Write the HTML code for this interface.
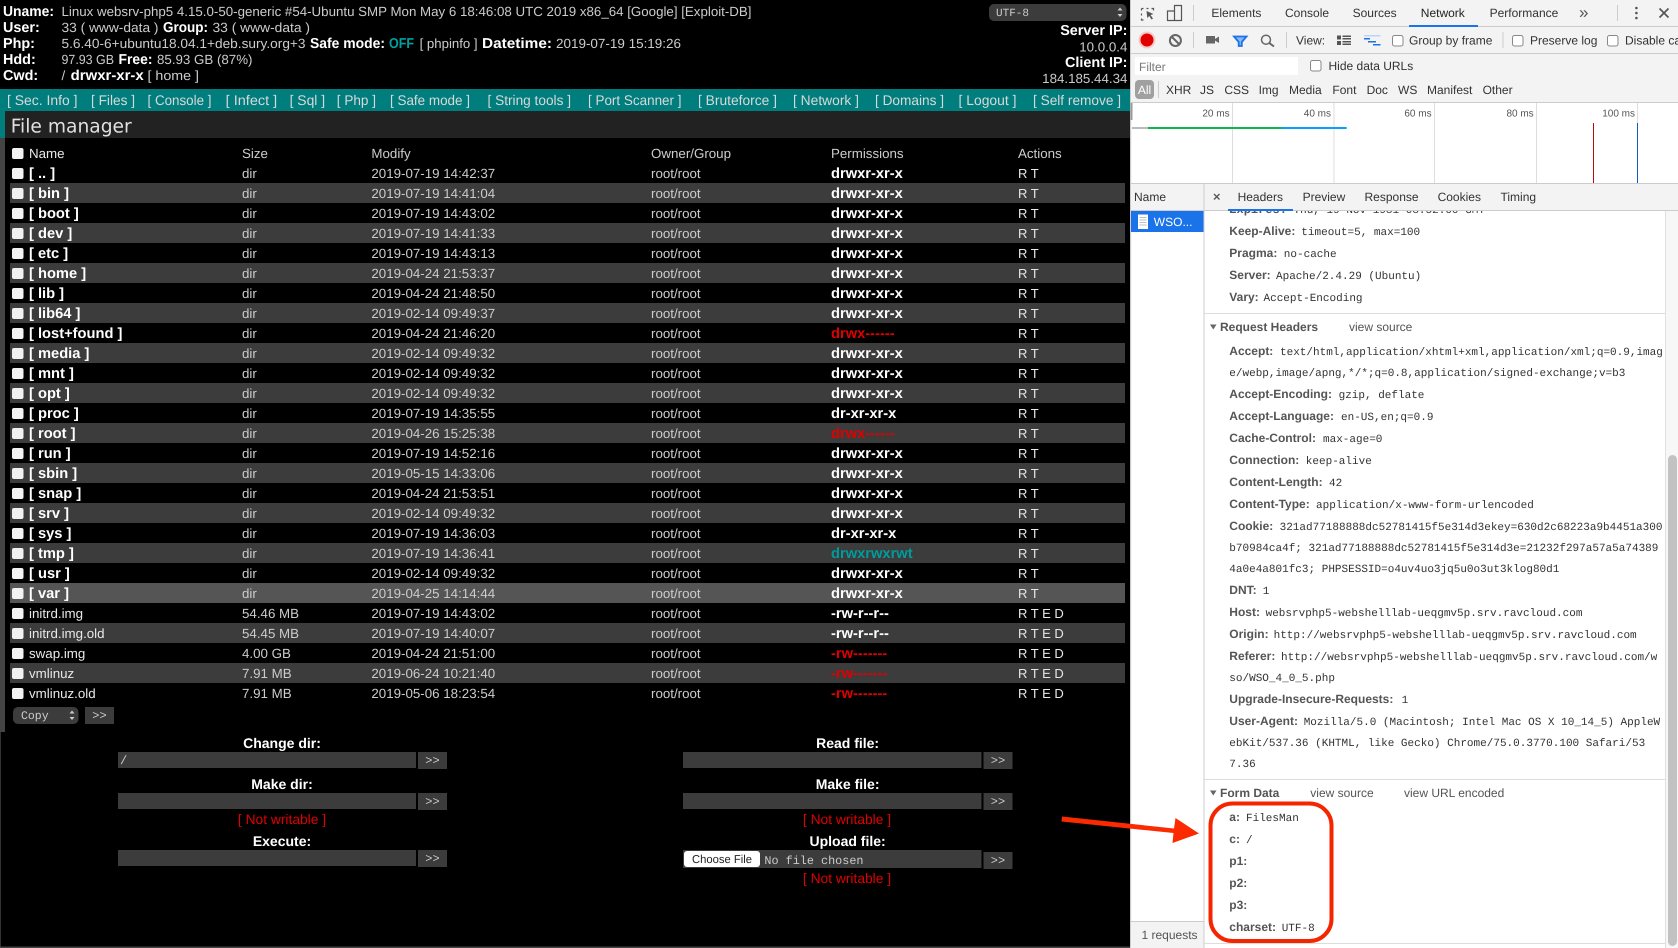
<!DOCTYPE html>
<html><head><meta charset="utf-8"><title>WSO</title>
<style>
html,body{margin:0;padding:0;background:#000;overflow:hidden}
svg{display:block;filter:blur(.3px)}
text{font-family:"Liberation Sans",sans-serif;white-space:pre;text-rendering:geometricPrecision}
.t{font-size:13.33px;fill:#ccc}
.w{font-size:13.33px;fill:#e8e8e8}
.a{font-size:13px;fill:#e8e8e8}
.b{font-size:14.4px;font-weight:bold;fill:#fff}
.n{font-size:14.7px;font-weight:bold;fill:#fff}
.l{font-size:14px;font-weight:bold;fill:#fff}
.nav{font-size:14px;fill:#d8d8d8}
.r{fill:#e00000;font-weight:bold;font-size:14.7px}
.red{font-size:13.8px;fill:#e00000}
.m{font-family:"Liberation Mono",monospace;font-size:12px;fill:#ccc}
.d{font-size:12px;fill:#333}
.g{font-size:12px;fill:#555}
.s{font-size:10px;fill:#555}
.k{font-size:12px;font-weight:bold;fill:#555}
.v{font-family:"Liberation Mono",monospace;font-size:11px;fill:#333}
.cb{fill:#f2f2f2}
</style></head><body>
<svg xmlns="http://www.w3.org/2000/svg" width="1678" height="948" viewBox="0 0 1678 948">
<rect width="1678" height="948" fill="#000"/>
<!-- header info -->
<text class="b" x="3" y="16" textLength="51" lengthAdjust="spacingAndGlyphs">Uname:</text>
<text class="t" x="61.5" y="16" textLength="690" lengthAdjust="spacingAndGlyphs">Linux websrv-php5 4.15.0-50-generic #54-Ubuntu SMP Mon May 6 18:46:08 UTC 2019 x86_64 [Google] [Exploit-DB]</text>
<text class="b" x="3" y="32">User:</text>
<text class="t" x="61.5" y="32" textLength="97" lengthAdjust="spacingAndGlyphs">33 ( www-data )</text>
<text class="b" x="163" y="32" textLength="45" lengthAdjust="spacingAndGlyphs">Group:</text>
<text class="t" x="212.5" y="32" textLength="97.5" lengthAdjust="spacingAndGlyphs">33 ( www-data )</text>
<text class="b" x="3" y="48">Php:</text>
<text class="t" x="61.5" y="48" textLength="244" lengthAdjust="spacingAndGlyphs">5.6.40-6+ubuntu18.04.1+deb.sury.org+3</text>
<text class="b" x="310" y="48" textLength="75" lengthAdjust="spacingAndGlyphs">Safe mode:</text>
<text class="b" x="389" y="48" textLength="25" lengthAdjust="spacingAndGlyphs" style="fill:#00a0a0">OFF</text>
<text class="t" x="419.6" y="48" textLength="58" lengthAdjust="spacingAndGlyphs">[ phpinfo ]</text>
<text class="b" x="482" y="48" textLength="70" lengthAdjust="spacingAndGlyphs">Datetime:</text>
<text class="t" x="556" y="48" textLength="125" lengthAdjust="spacingAndGlyphs">2019-07-19 15:19:26</text>
<text class="b" x="3" y="64">Hdd:</text>
<text class="t" x="61.5" y="64" textLength="52.5" lengthAdjust="spacingAndGlyphs">97.93 GB</text>
<text class="b" x="118.5" y="64" textLength="34" lengthAdjust="spacingAndGlyphs">Free:</text>
<text class="t" x="157" y="64" textLength="95.5" lengthAdjust="spacingAndGlyphs">85.93 GB (87%)</text>
<text class="b" x="3" y="80">Cwd:</text>
<text class="t" x="61.5" y="80">/</text>
<text class="b" x="70.7" y="80" textLength="73" lengthAdjust="spacingAndGlyphs">drwxr-xr-x</text>
<text class="t" x="147.5" y="80" textLength="51.5" lengthAdjust="spacingAndGlyphs">[ home ]</text>
<!-- charset select -->
<rect x="989" y="4" width="137.5" height="17" rx="5" fill="#3c3c3c"/>
<text class="m" x="996" y="16" style="font-size:11px">UTF-8</text>
<path d="M1117.5 10.5l2.5-3 2.5 3zM1117.5 14l2.5 3 2.5-3z" fill="#ccc"/>
<text class="b" x="1127.4" y="35" text-anchor="end">Server IP:</text>
<text class="t" x="1127.4" y="51.5" text-anchor="end">10.0.0.4</text>
<text class="b" x="1127.4" y="67" text-anchor="end">Client IP:</text>
<text class="t" x="1127.4" y="83" text-anchor="end">184.185.44.34</text>
<!-- nav -->
<rect x="0" y="89" width="1130" height="22" fill="#007d7d"/>
<text class="nav" x="7" y="105" textLength="70.5" lengthAdjust="spacingAndGlyphs">[ Sec. Info ]</text>
<text class="nav" x="91" y="105" textLength="44" lengthAdjust="spacingAndGlyphs">[ Files ]</text>
<text class="nav" x="147.5" y="105" textLength="64" lengthAdjust="spacingAndGlyphs">[ Console ]</text>
<text class="nav" x="225.7" y="105" textLength="51.5" lengthAdjust="spacingAndGlyphs">[ Infect ]</text>
<text class="nav" x="289.6" y="105" textLength="35.5" lengthAdjust="spacingAndGlyphs">[ Sql ]</text>
<text class="nav" x="336.8" y="105" textLength="39.2" lengthAdjust="spacingAndGlyphs">[ Php ]</text>
<text class="nav" x="390" y="105" textLength="80" lengthAdjust="spacingAndGlyphs">[ Safe mode ]</text>
<text class="nav" x="487.5" y="105" textLength="83.5" lengthAdjust="spacingAndGlyphs">[ String tools ]</text>
<text class="nav" x="588" y="105" textLength="93.5" lengthAdjust="spacingAndGlyphs">[ Port Scanner ]</text>
<text class="nav" x="698" y="105" textLength="79" lengthAdjust="spacingAndGlyphs">[ Bruteforce ]</text>
<text class="nav" x="793" y="105" textLength="66" lengthAdjust="spacingAndGlyphs">[ Network ]</text>
<text class="nav" x="875" y="105" textLength="69" lengthAdjust="spacingAndGlyphs">[ Domains ]</text>
<text class="nav" x="958.5" y="105" textLength="58" lengthAdjust="spacingAndGlyphs">[ Logout ]</text>
<text class="nav" x="1033" y="105" textLength="88" lengthAdjust="spacingAndGlyphs">[ Self remove ]</text>
<!-- title -->
<rect x="0" y="111" width="5" height="27" fill="#007d7d"/>
<rect x="5" y="111" width="1125" height="27" fill="#222"/>
<text x="10.7" y="132.5" textLength="121" lengthAdjust="spacingAndGlyphs" style="font-family:'DejaVu Sans',sans-serif;font-size:19px;fill:#e0e0e0">File manager</text>
<rect x="0" y="138" width="5" height="594" fill="#444"/>
<rect x="0" y="732" width="1" height="216" fill="#333"/>
<rect x="0" y="946.5" width="1130" height="1.5" fill="#444"/>
<!-- stripes -->
<g fill="#3c3c3c">
<rect x="10" y="183" width="1115" height="20"/><rect x="10" y="223" width="1115" height="20"/>
<rect x="10" y="263" width="1115" height="20"/><rect x="10" y="303" width="1115" height="20"/>
<rect x="10" y="343" width="1115" height="20"/><rect x="10" y="383" width="1115" height="20"/>
<rect x="10" y="423" width="1115" height="20"/><rect x="10" y="463" width="1115" height="20"/>
<rect x="10" y="503" width="1115" height="20"/><rect x="10" y="543" width="1115" height="20"/>
<rect x="10" y="583" width="1115" height="20" fill="#555"/><rect x="10" y="623" width="1115" height="20"/>
<rect x="10" y="663" width="1115" height="20"/>
</g>
<!-- table -->
<g transform="translate(0,143)"><rect class="cb" x="12" y="5" width="11.5" height="11" rx="2"/><text class="w" x="29" y="15">Name</text><text class="t" x="242" y="15">Size</text><text class="t" x="371.4" y="15">Modify</text><text class="t" x="651" y="15">Owner/Group</text><text class="t" x="831" y="15">Permissions</text><text class="t" x="1018" y="15">Actions</text></g>
<g transform="translate(0,163)"><rect class="cb" x="12" y="5" width="11.5" height="11" rx="2"/><text class="n" x="29" y="15">[ .. ]</text><text class="t" x="242" y="15">dir</text><text class="t" x="371.4" y="15">2019-07-19 14:42:37</text><text class="t" x="651" y="15">root/root</text><text class="n" x="831" y="15">drwxr-xr-x</text><text class="a" x="1018" y="15">R T</text></g>
<g transform="translate(0,183)"><rect class="cb" x="12" y="5" width="11.5" height="11" rx="2"/><text class="n" x="29" y="15">[ bin ]</text><text class="t" x="242" y="15">dir</text><text class="t" x="371.4" y="15">2019-07-19 14:41:04</text><text class="t" x="651" y="15">root/root</text><text class="n" x="831" y="15">drwxr-xr-x</text><text class="a" x="1018" y="15">R T</text></g>
<g transform="translate(0,203)"><rect class="cb" x="12" y="5" width="11.5" height="11" rx="2"/><text class="n" x="29" y="15">[ boot ]</text><text class="t" x="242" y="15">dir</text><text class="t" x="371.4" y="15">2019-07-19 14:43:02</text><text class="t" x="651" y="15">root/root</text><text class="n" x="831" y="15">drwxr-xr-x</text><text class="a" x="1018" y="15">R T</text></g>
<g transform="translate(0,223)"><rect class="cb" x="12" y="5" width="11.5" height="11" rx="2"/><text class="n" x="29" y="15">[ dev ]</text><text class="t" x="242" y="15">dir</text><text class="t" x="371.4" y="15">2019-07-19 14:41:33</text><text class="t" x="651" y="15">root/root</text><text class="n" x="831" y="15">drwxr-xr-x</text><text class="a" x="1018" y="15">R T</text></g>
<g transform="translate(0,243)"><rect class="cb" x="12" y="5" width="11.5" height="11" rx="2"/><text class="n" x="29" y="15">[ etc ]</text><text class="t" x="242" y="15">dir</text><text class="t" x="371.4" y="15">2019-07-19 14:43:13</text><text class="t" x="651" y="15">root/root</text><text class="n" x="831" y="15">drwxr-xr-x</text><text class="a" x="1018" y="15">R T</text></g>
<g transform="translate(0,263)"><rect class="cb" x="12" y="5" width="11.5" height="11" rx="2"/><text class="n" x="29" y="15">[ home ]</text><text class="t" x="242" y="15">dir</text><text class="t" x="371.4" y="15">2019-04-24 21:53:37</text><text class="t" x="651" y="15">root/root</text><text class="n" x="831" y="15">drwxr-xr-x</text><text class="a" x="1018" y="15">R T</text></g>
<g transform="translate(0,283)"><rect class="cb" x="12" y="5" width="11.5" height="11" rx="2"/><text class="n" x="29" y="15">[ lib ]</text><text class="t" x="242" y="15">dir</text><text class="t" x="371.4" y="15">2019-04-24 21:48:50</text><text class="t" x="651" y="15">root/root</text><text class="n" x="831" y="15">drwxr-xr-x</text><text class="a" x="1018" y="15">R T</text></g>
<g transform="translate(0,303)"><rect class="cb" x="12" y="5" width="11.5" height="11" rx="2"/><text class="n" x="29" y="15">[ lib64 ]</text><text class="t" x="242" y="15">dir</text><text class="t" x="371.4" y="15">2019-02-14 09:49:37</text><text class="t" x="651" y="15">root/root</text><text class="n" x="831" y="15">drwxr-xr-x</text><text class="a" x="1018" y="15">R T</text></g>
<g transform="translate(0,323)"><rect class="cb" x="12" y="5" width="11.5" height="11" rx="2"/><text class="n" x="29" y="15">[ lost+found ]</text><text class="t" x="242" y="15">dir</text><text class="t" x="371.4" y="15">2019-04-24 21:46:20</text><text class="t" x="651" y="15">root/root</text><text class="r" x="831" y="15">drwx------</text><text class="a" x="1018" y="15">R T</text></g>
<g transform="translate(0,343)"><rect class="cb" x="12" y="5" width="11.5" height="11" rx="2"/><text class="n" x="29" y="15">[ media ]</text><text class="t" x="242" y="15">dir</text><text class="t" x="371.4" y="15">2019-02-14 09:49:32</text><text class="t" x="651" y="15">root/root</text><text class="n" x="831" y="15">drwxr-xr-x</text><text class="a" x="1018" y="15">R T</text></g>
<g transform="translate(0,363)"><rect class="cb" x="12" y="5" width="11.5" height="11" rx="2"/><text class="n" x="29" y="15">[ mnt ]</text><text class="t" x="242" y="15">dir</text><text class="t" x="371.4" y="15">2019-02-14 09:49:32</text><text class="t" x="651" y="15">root/root</text><text class="n" x="831" y="15">drwxr-xr-x</text><text class="a" x="1018" y="15">R T</text></g>
<g transform="translate(0,383)"><rect class="cb" x="12" y="5" width="11.5" height="11" rx="2"/><text class="n" x="29" y="15">[ opt ]</text><text class="t" x="242" y="15">dir</text><text class="t" x="371.4" y="15">2019-02-14 09:49:32</text><text class="t" x="651" y="15">root/root</text><text class="n" x="831" y="15">drwxr-xr-x</text><text class="a" x="1018" y="15">R T</text></g>
<g transform="translate(0,403)"><rect class="cb" x="12" y="5" width="11.5" height="11" rx="2"/><text class="n" x="29" y="15">[ proc ]</text><text class="t" x="242" y="15">dir</text><text class="t" x="371.4" y="15">2019-07-19 14:35:55</text><text class="t" x="651" y="15">root/root</text><text class="n" x="831" y="15">dr-xr-xr-x</text><text class="a" x="1018" y="15">R T</text></g>
<g transform="translate(0,423)"><rect class="cb" x="12" y="5" width="11.5" height="11" rx="2"/><text class="n" x="29" y="15">[ root ]</text><text class="t" x="242" y="15">dir</text><text class="t" x="371.4" y="15">2019-04-26 15:25:38</text><text class="t" x="651" y="15">root/root</text><text class="r" x="831" y="15">drwx------</text><text class="a" x="1018" y="15">R T</text></g>
<g transform="translate(0,443)"><rect class="cb" x="12" y="5" width="11.5" height="11" rx="2"/><text class="n" x="29" y="15">[ run ]</text><text class="t" x="242" y="15">dir</text><text class="t" x="371.4" y="15">2019-07-19 14:52:16</text><text class="t" x="651" y="15">root/root</text><text class="n" x="831" y="15">drwxr-xr-x</text><text class="a" x="1018" y="15">R T</text></g>
<g transform="translate(0,463)"><rect class="cb" x="12" y="5" width="11.5" height="11" rx="2"/><text class="n" x="29" y="15">[ sbin ]</text><text class="t" x="242" y="15">dir</text><text class="t" x="371.4" y="15">2019-05-15 14:33:06</text><text class="t" x="651" y="15">root/root</text><text class="n" x="831" y="15">drwxr-xr-x</text><text class="a" x="1018" y="15">R T</text></g>
<g transform="translate(0,483)"><rect class="cb" x="12" y="5" width="11.5" height="11" rx="2"/><text class="n" x="29" y="15">[ snap ]</text><text class="t" x="242" y="15">dir</text><text class="t" x="371.4" y="15">2019-04-24 21:53:51</text><text class="t" x="651" y="15">root/root</text><text class="n" x="831" y="15">drwxr-xr-x</text><text class="a" x="1018" y="15">R T</text></g>
<g transform="translate(0,503)"><rect class="cb" x="12" y="5" width="11.5" height="11" rx="2"/><text class="n" x="29" y="15">[ srv ]</text><text class="t" x="242" y="15">dir</text><text class="t" x="371.4" y="15">2019-02-14 09:49:32</text><text class="t" x="651" y="15">root/root</text><text class="n" x="831" y="15">drwxr-xr-x</text><text class="a" x="1018" y="15">R T</text></g>
<g transform="translate(0,523)"><rect class="cb" x="12" y="5" width="11.5" height="11" rx="2"/><text class="n" x="29" y="15">[ sys ]</text><text class="t" x="242" y="15">dir</text><text class="t" x="371.4" y="15">2019-07-19 14:36:03</text><text class="t" x="651" y="15">root/root</text><text class="n" x="831" y="15">dr-xr-xr-x</text><text class="a" x="1018" y="15">R T</text></g>
<g transform="translate(0,543)"><rect class="cb" x="12" y="5" width="11.5" height="11" rx="2"/><text class="n" x="29" y="15">[ tmp ]</text><text class="t" x="242" y="15">dir</text><text class="t" x="371.4" y="15">2019-07-19 14:36:41</text><text class="t" x="651" y="15">root/root</text><text class="n" x="831" y="15" style="fill:#009c9c">drwxrwxrwt</text><text class="a" x="1018" y="15">R T</text></g>
<g transform="translate(0,563)"><rect class="cb" x="12" y="5" width="11.5" height="11" rx="2"/><text class="n" x="29" y="15">[ usr ]</text><text class="t" x="242" y="15">dir</text><text class="t" x="371.4" y="15">2019-02-14 09:49:32</text><text class="t" x="651" y="15">root/root</text><text class="n" x="831" y="15">drwxr-xr-x</text><text class="a" x="1018" y="15">R T</text></g>
<g transform="translate(0,583)"><rect class="cb" x="12" y="5" width="11.5" height="11" rx="2"/><text class="n" x="29" y="15">[ var ]</text><text class="t" x="242" y="15">dir</text><text class="t" x="371.4" y="15">2019-04-25 14:14:44</text><text class="t" x="651" y="15">root/root</text><text class="n" x="831" y="15">drwxr-xr-x</text><text class="a" x="1018" y="15">R T</text></g>
<g transform="translate(0,603)"><rect class="cb" x="12" y="5" width="11.5" height="11" rx="2"/><text class="w" x="29" y="15">initrd.img</text><text class="t" x="242" y="15">54.46 MB</text><text class="t" x="371.4" y="15">2019-07-19 14:43:02</text><text class="t" x="651" y="15">root/root</text><text class="n" x="831" y="15">-rw-r--r--</text><text class="a" x="1018" y="15">R T E D</text></g>
<g transform="translate(0,623)"><rect class="cb" x="12" y="5" width="11.5" height="11" rx="2"/><text class="w" x="29" y="15">initrd.img.old</text><text class="t" x="242" y="15">54.45 MB</text><text class="t" x="371.4" y="15">2019-07-19 14:40:07</text><text class="t" x="651" y="15">root/root</text><text class="n" x="831" y="15">-rw-r--r--</text><text class="a" x="1018" y="15">R T E D</text></g>
<g transform="translate(0,643)"><rect class="cb" x="12" y="5" width="11.5" height="11" rx="2"/><text class="w" x="29" y="15">swap.img</text><text class="t" x="242" y="15">4.00 GB</text><text class="t" x="371.4" y="15">2019-04-24 21:51:00</text><text class="t" x="651" y="15">root/root</text><text class="r" x="831" y="15">-rw-------</text><text class="a" x="1018" y="15">R T E D</text></g>
<g transform="translate(0,663)"><rect class="cb" x="12" y="5" width="11.5" height="11" rx="2"/><text class="w" x="29" y="15">vmlinuz</text><text class="t" x="242" y="15">7.91 MB</text><text class="t" x="371.4" y="15">2019-06-24 10:21:40</text><text class="t" x="651" y="15">root/root</text><text class="r" x="831" y="15">-rw-------</text><text class="a" x="1018" y="15">R T E D</text></g>
<g transform="translate(0,683)"><rect class="cb" x="12" y="5" width="11.5" height="11" rx="2"/><text class="w" x="29" y="15">vmlinuz.old</text><text class="t" x="242" y="15">7.91 MB</text><text class="t" x="371.4" y="15">2019-05-06 18:23:54</text><text class="t" x="651" y="15">root/root</text><text class="r" x="831" y="15">-rw-------</text><text class="a" x="1018" y="15">R T E D</text></g>
<!-- copy -->
<rect x="13" y="707" width="65.5" height="17" rx="5" fill="#3c3c3c"/>
<text class="m" x="21" y="719" style="font-size:11.5px">Copy</text>
<path d="M69.5 713.5l2.5-3 2.5 3zM69.5 717l2.5 3 2.5-3z" fill="#ccc"/>
<rect x="85" y="707" width="29" height="17" fill="#3c3c3c"/>
<text class="m" x="99.5" y="719" text-anchor="middle">&gt;&gt;</text>
<!-- forms -->
<text class="l" x="282" y="748" text-anchor="middle">Change dir:</text>
<text class="l" x="282" y="789" text-anchor="middle">Make dir:</text>
<text class="red" x="282" y="824" text-anchor="middle">[ Not writable ]</text>
<text class="l" x="282" y="846" text-anchor="middle">Execute:</text>
<text class="l" x="847.6" y="748" text-anchor="middle">Read file:</text>
<text class="l" x="847.6" y="789" text-anchor="middle">Make file:</text>
<text class="red" x="847" y="824" text-anchor="middle">[ Not writable ]</text>
<text class="l" x="847.6" y="846" text-anchor="middle">Upload file:</text>
<text class="red" x="847" y="883" text-anchor="middle">[ Not writable ]</text>
<g fill="#3c3c3c">
<rect x="118" y="752" width="298" height="16"/><rect x="418" y="752" width="29" height="17"/>
<rect x="118" y="793" width="298" height="16"/><rect x="418" y="793" width="29" height="17"/>
<rect x="118" y="850" width="298" height="16"/><rect x="418" y="850" width="29" height="17"/>
<rect x="683" y="752" width="298.5" height="16"/><rect x="983.5" y="752" width="29" height="17"/>
<rect x="683" y="793" width="298.5" height="16"/><rect x="983.5" y="793" width="29" height="17"/>
<rect x="683" y="850" width="298.5" height="18"/><rect x="983.5" y="852" width="29" height="17"/>
</g>
<text class="m" x="120" y="764">/</text>
<text class="m" x="432.5" y="764" text-anchor="middle">&gt;&gt;</text>
<text class="m" x="432.5" y="805" text-anchor="middle">&gt;&gt;</text>
<text class="m" x="432.5" y="862" text-anchor="middle">&gt;&gt;</text>
<text class="m" x="998" y="764" text-anchor="middle">&gt;&gt;</text>
<text class="m" x="998" y="805" text-anchor="middle">&gt;&gt;</text>
<text class="m" x="998" y="864" text-anchor="middle">&gt;&gt;</text>
<rect x="684" y="851" width="76" height="16" rx="3" fill="#fff"/>
<text x="722" y="863" text-anchor="middle" style="font-size:11.5px;fill:#222" textLength="60" lengthAdjust="spacingAndGlyphs">Choose File</text>
<text class="m" x="764.4" y="864" style="font-size:11.8px">No file chosen</text>
<!-- devtools -->
<rect x="1130" y="0" width="548" height="948" fill="#fff"/>
<rect x="1130" y="0" width="1.2" height="948" fill="#ccc"/>
<rect x="1131" y="0" width="547" height="102" fill="#f3f3f3"/>
<rect x="1131" y="26" width="547" height="1" fill="#ccc"/>
<rect x="1131" y="53" width="547" height="1" fill="#ccc"/>
<rect x="1131" y="102" width="547" height="1" fill="#ccc"/>
<!-- top icons -->
<path d="M1141.5 8.5h2m3 0h2m3 0h2v2M1141.5 8.5v2m0 3v2m0 3v1.5h2" fill="none" stroke="#555" stroke-width="1.2"/>
<path d="M1146.5 11l7 3-3 1 2.5 3.5-1.5 1-2.2-3.500-2 2z" fill="#555"/>
<path d="M1174.5 5.5h7v15h-7zM1174.5 11h-7v9.5h7" fill="none" stroke="#555" stroke-width="1.2"/>
<g fill="#555"><rect x="1193" y="5" width="1" height="16" fill="#ccc"/><rect x="1617" y="5" width="1" height="16" fill="#ccc"/><circle cx="1636.4" cy="8" r="1.3"/><circle cx="1636.4" cy="13" r="1.3"/><circle cx="1636.4" cy="18" r="1.3"/></g>
<path d="M1659.5 8.5l9 9m0-9l-9 9" stroke="#555" stroke-width="1.7"/>
<text class="d" x="1211.4" y="17">Elements</text>
<text class="d" x="1285" y="17">Console</text>
<text class="d" x="1352.6" y="17">Sources</text>
<text class="d" x="1420.8" y="17" style="fill:#222">Network</text>
<text class="d" x="1489.6" y="17">Performance</text>
<text class="d" x="1579" y="18" style="font-size:17px;fill:#555">»</text>
<rect x="1409" y="25" width="69" height="2" fill="#1a73e8"/>
<!-- row 2 -->
<circle cx="1147" cy="40" r="8.5" fill="#f6c9c9"/><circle cx="1147" cy="40" r="6.5" fill="#e00000"/>
<circle cx="1175.4" cy="40.5" r="5.5" fill="none" stroke="#666" stroke-width="2"/><path d="M1171.5 36.5l8 8" stroke="#666" stroke-width="2"/>
<rect x="1193" y="32" width="1" height="16" fill="#ccc"/>
<path d="M1206 36h9v7.5h-9zM1215 39l4-2.5v6.5l-4-2.5z" fill="#666"/>
<path d="M1234 36.5h12.5l-4.7 5.5v4h-3.1v-4z" fill="#8ab8f0" stroke="#1a73e8" stroke-width="1.8"/>
<circle cx="1266" cy="39.700" r="4.5" fill="none" stroke="#666" stroke-width="1.5"/><path d="M1269.3 43l4.7 3.5" stroke="#666" stroke-width="2"/>
<rect x="1286" y="32" width="1" height="16" fill="#ccc"/>
<text class="d" x="1296" y="44.5">View:</text>
<g fill="#555"><rect x="1337" y="35.5" width="4" height="4"/><rect x="1342.5" y="35.5" width="8.5" height="1.5"/><rect x="1342.5" y="38" width="8.5" height="1.5"/><rect x="1337" y="41" width="4" height="4"/><rect x="1342.5" y="41" width="8.5" height="1.5"/><rect x="1342.5" y="43.5" width="8.5" height="1.5"/></g>
<rect x="1364" y="35" width="16.5" height="1.5" fill="#bcd4f5"/><rect x="1364" y="38" width="6" height="1.5" fill="#1a73e8"/><rect x="1368" y="41" width="8" height="1.5" fill="#1a73e8"/><rect x="1373" y="44" width="7.5" height="1.5" fill="#1a73e8"/>
<g fill="#fff" stroke="#888"><rect x="1392.5" y="35.5" width="10.5" height="10.5" rx="2"/><rect x="1512.5" y="35.5" width="10.5" height="10.5" rx="2"/><rect x="1607.5" y="35.5" width="10.5" height="10.5" rx="2"/><rect x="1310.5" y="60.5" width="10.5" height="10.5" rx="2"/></g>
<text class="d" x="1409" y="44.5">Group by frame</text>
<rect x="1502.5" y="32" width="1" height="16" fill="#ccc"/>
<text class="d" x="1530" y="44.5">Preserve log</text>
<text class="d" x="1625" y="44.5">Disable cache</text>
<!-- row 3 -->
<rect x="1135" y="57" width="163" height="18" fill="#fff"/>
<text class="d" x="1139" y="71" style="fill:#777">Filter</text>
<text class="d" x="1328.5" y="70">Hide data URLs</text>
<rect x="1135" y="80" width="19" height="19" rx="4" fill="#a0a0a0"/>
<text class="d" x="1144.5" y="94" text-anchor="middle" style="fill:#fff">All</text>
<rect x="1158" y="81" width="1" height="17" fill="#ccc"/>
<text class="d" x="1166" y="94">XHR</text><text class="d" x="1200" y="94">JS</text><text class="d" x="1224.4" y="94">CSS</text><text class="d" x="1258.6" y="94">Img</text><text class="d" x="1289" y="94">Media</text><text class="d" x="1332.4" y="94">Font</text><text class="d" x="1366.6" y="94">Doc</text><text class="d" x="1398" y="94">WS</text><text class="d" x="1427" y="94">Manifest</text><text class="d" x="1482.6" y="94">Other</text>
<!-- overview -->
<rect x="1130.5" y="103" width="2" height="17" fill="#999"/>
<g fill="#ddd"><rect x="1232" y="103" width="1" height="80"/><rect x="1333.5" y="103" width="1" height="80"/><rect x="1434" y="103" width="1" height="80"/><rect x="1536" y="103" width="1" height="80"/><rect x="1637" y="103" width="1" height="80"/></g>
<text class="s" x="1229.6" y="116.5" text-anchor="end">20 ms</text>
<text class="s" x="1331" y="116.5" text-anchor="end">40 ms</text>
<text class="s" x="1431.6" y="116.5" text-anchor="end">60 ms</text>
<text class="s" x="1533.7" y="116.5" text-anchor="end">80 ms</text>
<text class="s" x="1635" y="116.5" text-anchor="end">100 ms</text>
<rect x="1132" y="127" width="16" height="2" fill="#bbb"/><rect x="1148" y="127" width="134" height="2" fill="#0ab84f"/><rect x="1282" y="127" width="64.7" height="2" fill="#0aa0ff"/>
<rect x="1593" y="123" width="1" height="60" fill="#b01010"/><rect x="1637" y="123" width="1" height="60" fill="#1558c0"/>
<!-- details pane tab bar -->
<text class="v" x="1229.3" y="213.2"><tspan class="k">Expires:</tspan> Thu, 19 Nov 1981 08:52:00 GMT</text>
<rect x="1131" y="183" width="547" height="28" fill="#f3f3f3"/>
<rect x="1131" y="183" width="547" height="1" fill="#ccc"/>
<rect x="1131" y="210" width="547" height="1" fill="#ccc"/>
<text class="d" x="1134" y="201">Name</text>
<path d="M1214 194l5.5 5.5m0-5.5l-5.5 5.5" stroke="#555" stroke-width="1.3"/>
<text class="d" x="1237.6" y="201">Headers</text>
<text class="d" x="1302.6" y="201">Preview</text>
<text class="d" x="1364.5" y="201">Response</text>
<text class="d" x="1437.6" y="201">Cookies</text>
<text class="d" x="1500.5" y="201">Timing</text>
<rect x="1228" y="209" width="65" height="2" fill="#1a73e8"/>
<rect x="1203.5" y="183" width="1" height="765" fill="#ccc"/>
<!-- request item -->
<rect x="1131" y="211" width="72.5" height="21" fill="#1a73e8"/>
<rect x="1138" y="214.5" width="10" height="14.5" fill="#fff"/>
<path d="M1139.5 217.5h7m-7 2.5h7m-7 2.5h7m-7 2.5h7" stroke="#aaa" stroke-width="0.8"/>
<text class="d" x="1153.8" y="226" style="fill:#fff">WSO...</text>
<rect x="1131" y="921" width="72.5" height="27" fill="#f3f3f3"/>
<rect x="1131" y="921" width="72.5" height="1" fill="#ccc"/>
<text class="d" x="1141.5" y="939" style="fill:#555">1 requests</text>
<!-- scrollbar -->
<rect x="1665" y="211" width="13" height="737" fill="#f7f7f7"/>
<rect x="1665" y="211" width="1" height="737" fill="#e0e0e0"/>
<rect x="1668" y="455" width="9" height="491" rx="4.5" fill="#c2c2c2"/>
<!-- headers -->
<text class="k" x="1229.3" y="235">Keep-Alive:</text><text class="v" x="1301.3" y="235">timeout=5, max=100</text>
<text class="k" x="1229.3" y="257">Pragma:</text><text class="v" x="1283.8" y="257">no-cache</text>
<text class="k" x="1229.3" y="279">Server:</text><text class="v" x="1276" y="279">Apache/2.4.29 (Ubuntu)</text>
<text class="k" x="1229.3" y="301">Vary:</text><text class="v" x="1263.5" y="301">Accept-Encoding</text>
<rect x="1204" y="313" width="461" height="1" fill="#ddd"/>
<path d="M1210 324.5h6.5l-3.25 5z" fill="#666"/>
<text class="k" x="1220" y="331">Request Headers</text>
<text class="g" x="1349" y="331">view source</text>
<text class="k" x="1229.3" y="355">Accept:</text><text class="v" x="1280" y="355">text/html,application/xhtml+xml,application/xml;q=0.9,imag</text>
<text class="v" x="1229.3" y="376">e/webp,image/apng,*/*;q=0.8,application/signed-exchange;v=b3</text>
<text class="k" x="1229.3" y="398">Accept-Encoding:</text><text class="v" x="1338.6" y="398">gzip, deflate</text>
<text class="k" x="1229.3" y="420">Accept-Language:</text><text class="v" x="1341" y="420">en-US,en;q=0.9</text>
<text class="k" x="1229.3" y="442">Cache-Control:</text><text class="v" x="1323" y="442">max-age=0</text>
<text class="k" x="1229.3" y="464">Connection:</text><text class="v" x="1305.8" y="464">keep-alive</text>
<text class="k" x="1229.3" y="486">Content-Length:</text><text class="v" x="1329" y="486">42</text>
<text class="k" x="1229.3" y="508">Content-Type:</text><text class="v" x="1316" y="508">application/x-www-form-urlencoded</text>
<text class="k" x="1229.3" y="530">Cookie:</text><text class="v" x="1279.6" y="530">321ad77188888dc52781415f5e314d3ekey=630d2c68223a9b4451a300</text>
<text class="v" x="1229.3" y="551">b70984ca4f; 321ad77188888dc52781415f5e314d3e=21232f297a57a5a74389</text>
<text class="v" x="1229.3" y="572">4a0e4a801fc3; PHPSESSID=o4uv4uo3jq5u0o3ut3klog80d1</text>
<text class="k" x="1229.3" y="594">DNT:</text><text class="v" x="1262.8" y="594">1</text>
<text class="k" x="1229.3" y="616">Host:</text><text class="v" x="1265.6" y="616">websrvphp5-webshelllab-ueqgmv5p.srv.ravcloud.com</text>
<text class="k" x="1229.3" y="638">Origin:</text><text class="v" x="1273.6" y="638">http://websrvphp5-webshelllab-ueqgmv5p.srv.ravcloud.com</text>
<text class="k" x="1229.3" y="660">Referer:</text><text class="v" x="1281" y="660">http://websrvphp5-webshelllab-ueqgmv5p.srv.ravcloud.com/w</text>
<text class="v" x="1229.3" y="681">so/WSO_4_0_5.php</text>
<text class="k" x="1229.3" y="703">Upgrade-Insecure-Requests:</text><text class="v" x="1401.6" y="703">1</text>
<text class="k" x="1229.3" y="725">User-Agent:</text><text class="v" x="1303.7" y="725">Mozilla/5.0 (Macintosh; Intel Mac OS X 10_14_5) AppleW</text>
<text class="v" x="1229.3" y="746">ebKit/537.36 (KHTML, like Gecko) Chrome/75.0.3770.100 Safari/53</text>
<text class="v" x="1229.3" y="767">7.36</text>
<rect x="1204" y="779" width="461" height="1" fill="#ddd"/>
<path d="M1210 790.5h6.5l-3.25 5z" fill="#666"/>
<text class="k" x="1220" y="797">Form Data</text>
<text class="g" x="1310.3" y="797">view source</text>
<text class="g" x="1404" y="797">view URL encoded</text>
<text class="k" x="1229.3" y="821">a:</text><text class="v" x="1246" y="821">FilesMan</text>
<text class="k" x="1229.3" y="843">c:</text><text class="v" x="1246" y="843">/</text>
<text class="k" x="1229.3" y="865">p1:</text>
<text class="k" x="1229.3" y="887">p2:</text>
<text class="k" x="1229.3" y="909">p3:</text>
<text class="k" x="1229.3" y="931">charset:</text><text class="v" x="1281.7" y="931">UTF-8</text>
<rect x="1204" y="943" width="461" height="1" fill="#ddd"/>
<!-- annotations -->
<rect x="1210.5" y="803.5" width="121" height="137.5" rx="22" fill="none" stroke="#f52500" stroke-width="4"/>
<path d="M1062 816.5L1174 828.5L1175.5 818L1199 833.5L1172.5 843L1173.5 833L1061.5 821.5z" fill="#fb2a00"/>
</svg>
</body></html>
